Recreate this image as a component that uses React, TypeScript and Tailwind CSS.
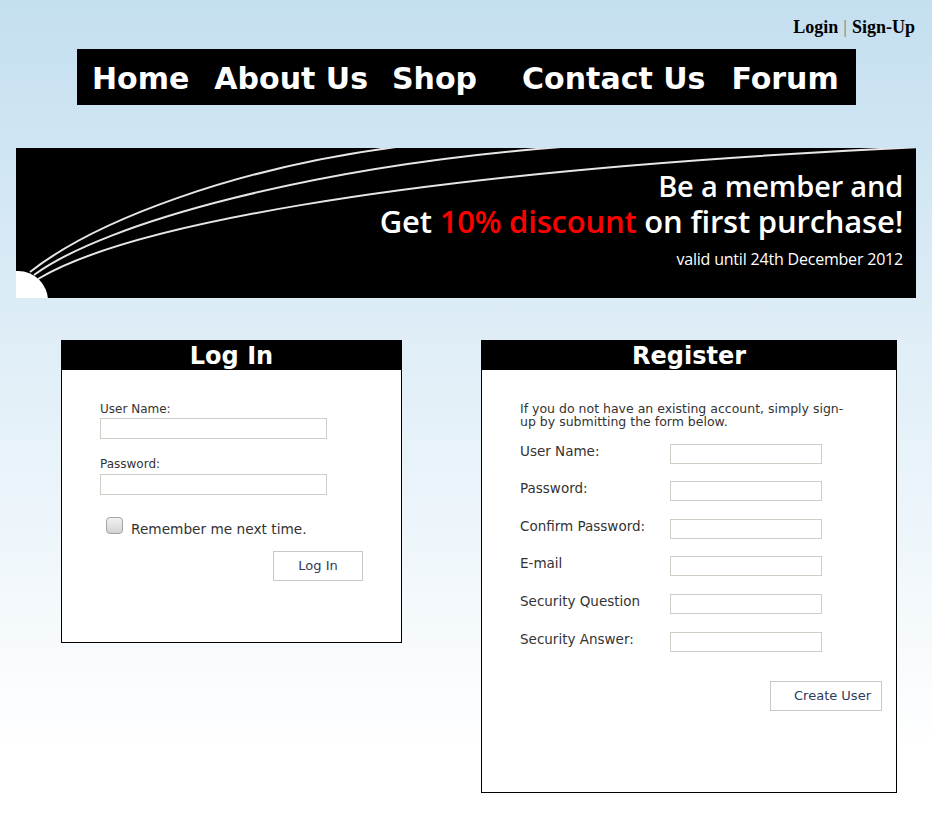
import React from 'react';

const verdana = { fontFamily: '"DejaVu Sans", Verdana, sans-serif' };

const navItems = [
  { label: 'Home', cls: '' },
  { label: 'About Us', cls: 'ml-[25px]' },
  { label: 'Shop', cls: 'ml-[24px]' },
  { label: 'Contact Us', cls: 'ml-[45px]' },
  { label: 'Forum', cls: 'ml-[26px]' },
];

const regFields = ['User Name:', 'Password:', 'Confirm Password:', 'E-mail', 'Security Question', 'Security Answer:'];

const Banner: React.FC = () => (
  <div className="relative ml-[16px] mt-[43px] w-[900px] h-[150px] bg-black overflow-hidden">
    <svg className="absolute inset-0" width="900" height="150" viewBox="0 0 900 150">
      <g fill="none" stroke="#e6e6e6" strokeWidth="2">
        <path d="M14 124 C 80 72, 220 20, 380 -1" />
        <path d="M18 127 C 90 74, 300 18, 545 -1" />
        <path d="M22 131 C 100 84, 350 25, 905 -1" />
      </g>
      <circle cx="2" cy="153" r="30" fill="#ffffff" />
    </svg>
    <div className="relative flex flex-col items-end pr-[13px] pt-[23px] text-white font-['Open_Sans',sans-serif]">
      <div className="text-[29px] leading-[29px] font-semibold tracking-[-0.2px]">Be a member and</div>
      <div className="mt-[5px] text-[31px] leading-[33px] font-semibold tracking-[-0.2px]">
        Get <span className="text-[#ff0000]">10% discount</span> on first purchase!
      </div>
      <div className="mt-[11px] text-[16px] leading-[20px] tracking-[-0.2px]">valid until 24th December 2012</div>
    </div>
  </div>
);

const PanelHeader: React.FC<{ title: string }> = ({ title }) => (
  <div className="h-[29px] bg-black text-white text-center font-bold text-[24px] leading-[30px]" style={verdana}>
    {title}
  </div>
);

const LoginPanel: React.FC = () => (
  <div className="ml-[61px] w-[341px] h-[303px] border border-black bg-white" style={verdana}>
    <PanelHeader title="Log In" />
    <div className="px-[38px] pt-[32px] text-[#333]">
      <div className="text-[12px] leading-[15px] mb-[1px]">User Name:</div>
      <input className="block w-[227px] h-[21px] border border-[#cfcdc6] outline-none" />
      <div className="mt-[18px] text-[12px] leading-[15px] mb-[2px]">Password:</div>
      <input type="password" className="block w-[227px] h-[21px] border border-[#cfcdc6] outline-none" />
      <div className="mt-[22px] flex items-start ml-[6px]">
        <span className="w-[17px] h-[17px] rounded-[4px] border border-[#a3a3a3] bg-gradient-to-b from-[#f2f2f2] to-[#d3d3d3]" />
        <span className="ml-[8px] mt-[4px] text-[13.7px] leading-[17px]">Remember me next time.</span>
      </div>
      <div className="flex justify-end mt-[13px]">
        <button className="w-[90px] h-[30px] border border-[#c8c8c8] bg-white text-[13px] text-[#2e3a5a]">Log In</button>
      </div>
    </div>
  </div>
);

const RegisterPanel: React.FC = () => (
  <div className="ml-[79px] w-[416px] h-[453px] border border-black bg-white" style={verdana}>
    <PanelHeader title="Register" />
    <div className="pl-[38px] pr-[14px] pt-[32px] text-[#333]">
      <p className="text-[12.5px] leading-[13.3px]">
        If you do not have an existing account, simply sign-
        <br />
        up by submitting the form below.
      </p>
      <div className="mt-[15px] flex flex-col gap-[17.6px]">
        {regFields.map((f) => (
          <div key={f} className="flex items-start">
            <div className="w-[150px] text-[13.5px] leading-[16px] -mt-[1px]">{f}</div>
            <input className="block w-[152px] h-[20px] border border-[#cfcdc6] outline-none" />
          </div>
        ))}
      </div>
      <div className="flex justify-end mt-[29px]">
        <button className="w-[112px] h-[30px] border border-[#c8c8c8] bg-white text-[13px] text-[#2e3a5a] text-right pr-[10px]">
          Create User
        </button>
      </div>
    </div>
  </div>
);

const App: React.FC = () => {
  return (
    <div className="min-h-[816px] w-full bg-[linear-gradient(to_bottom,#c4dff0_0%,#ffffff_92%)] overflow-hidden">
      <div className="flex justify-end pr-[17px] pt-[17px] text-[18px] leading-[20px] font-bold font-['Liberation_Serif',serif]">
        <span>Login</span>
        <span className="mx-[5px] font-normal text-[#777]">|</span>
        <span>Sign-Up</span>
      </div>
      <nav className="ml-[77px] mt-[12px] w-[779px] h-[56px] bg-black flex items-center pl-[15px] pt-[3px] text-white font-bold text-[30px] leading-[30px]" style={verdana}>
        {navItems.map((n) => (
          <span key={n.label} className={n.cls}>
            {n.label}
          </span>
        ))}
      </nav>
      <Banner />
      <div className="flex items-start mt-[42px]">
        <LoginPanel />
        <RegisterPanel />
      </div>
    </div>
  );
};

export default App;
